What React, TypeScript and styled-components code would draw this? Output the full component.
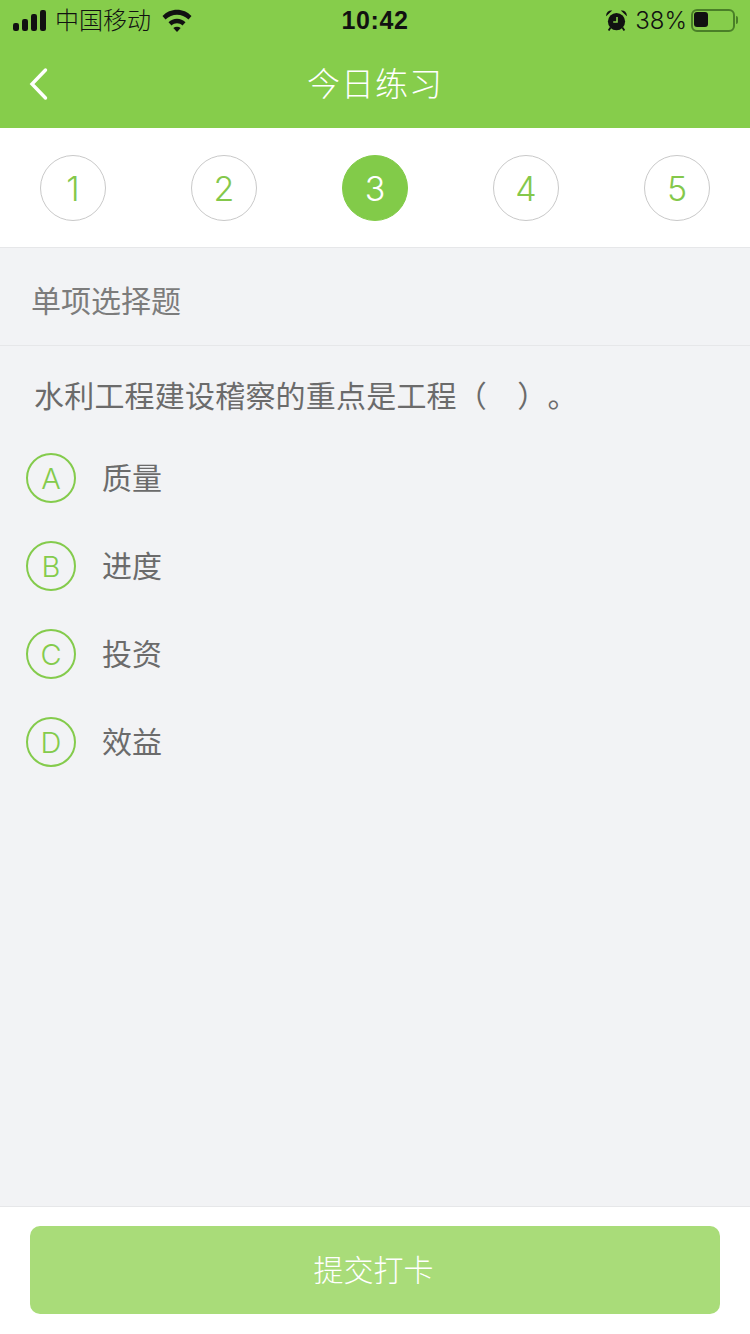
import React from 'react'
import styled, { createGlobalStyle } from 'styled-components'

const GREEN = '#86cd4b'
const FONT = '"Noto Sans CJK SC", "Liberation Sans", sans-serif'
const LATIN = '"Liberation Sans", "Noto Sans CJK SC", sans-serif'
const LIGHT = 'Inter, "Liberation Sans", sans-serif'

const GlobalStyle = createGlobalStyle`
  html, body {
    margin: 0;
    padding: 0;
    background: #f2f3f5;
  }
  * {
    box-sizing: border-box;
  }
`

const Page = styled.div`
  width: 750px;
  height: 1334px;
  display: flex;
  flex-direction: column;
  overflow: hidden;
  background: #f2f3f5;
  font-family: ${FONT};
  text-spacing-trim: space-all;
`

const Top = styled.header`
  height: 128px;
  flex: none;
  background: ${GREEN};
`

const StatusBar = styled.div`
  height: 40px;
  padding: 0 13px;
  display: grid;
  grid-template-columns: 1fr auto 1fr;
  align-items: center;
  color: #111;
`

const StatusLeft = styled.div`
  display: flex;
  align-items: center;
`

const Carrier = styled.span`
  margin: -2px 0 0 9px;
  font-size: 24px;
  line-height: 40px;
  font-weight: 300;
`

const Wifi = styled.svg`
  margin-left: 11px;
`

const Clock = styled.span`
  font-family: ${LATIN};
  font-size: 25px;
  font-weight: 700;
  letter-spacing: 0.6px;
`

const StatusRight = styled.div`
  display: flex;
  align-items: center;
  justify-content: flex-end;
`

const Percent = styled.span`
  margin: 0 4px 0 8px;
  font-family: ${LIGHT};
  font-size: 24px;
  font-weight: 350;
`

const Battery = styled.div`
  width: 44px;
  height: 23px;
  padding: 1px;
  border: 2px solid #4a7f28;
  border-radius: 6px;
  margin-right: 2px;
  position: relative;

  &::before {
    content: '';
    display: block;
    width: 14px;
    height: 15px;
    border-radius: 3px;
    background: #111;
  }

  &::after {
    content: '';
    position: absolute;
    right: -5px;
    top: 5px;
    width: 2px;
    height: 8px;
    border-radius: 0 2px 2px 0;
    background: #4a7f28;
  }
`

const NavBar = styled.div`
  height: 88px;
  padding: 0 0 0 28px;
  display: grid;
  grid-template-columns: 1fr auto 1fr;
  align-items: center;
`

const NavTitle = styled.h1`
  margin: -4px 0 0;
  color: #fff;
  font-size: 33px;
  font-weight: 300;
  letter-spacing: 1px;
  transform: translateX(-14px);
`

const Steps = styled.div`
  height: 120px;
  flex: none;
  padding: 27px 40px 0;
  display: flex;
  justify-content: space-between;
  align-items: flex-start;
  background: #fff;
  border-bottom: 1px solid #e6e7e9;
`

const Step = styled.div<{ $active?: boolean }>`
  width: 66px;
  height: 66px;
  display: flex;
  align-items: center;
  justify-content: center;
  border-radius: 50%;
  border: 1px solid ${p => (p.$active ? '#82cb49' : '#c9c9c9')};
  background: ${p => (p.$active ? '#82cb49' : '#fff')};
  color: ${p => (p.$active ? '#fff' : '#84c84b')};
  font-family: ${LIGHT};
  font-size: 34px;
  font-weight: 350;
`

const SectionTitle = styled.div`
  height: 98px;
  flex: none;
  padding: 4px 0 0 31px;
  display: flex;
  align-items: center;
  border-bottom: 1px solid #e6e7e9;
  color: #7c7c7c;
  font-size: 30px;
  font-weight: 400;
`

const Question = styled.p`
  margin: 0;
  height: 100px;
  flex: none;
  padding: 27px 0 0 34px;
  color: #6b6b6b;
  font-size: 30px;
  line-height: 42px;
  font-weight: 400;
  letter-spacing: 0.2px;
`

const Options = styled.div`
  flex: 1;
  padding: 7px 26px 0;
  display: flex;
  flex-direction: column;
  gap: 38px;
`

const Option = styled.div`
  height: 50px;
  display: flex;
  align-items: center;
  gap: 26px;
`

const Letter = styled.span`
  width: 50px;
  height: 50px;
  flex: none;
  display: flex;
  align-items: center;
  justify-content: center;
  padding-top: 1px;
  border-radius: 50%;
  border: 2px solid #84cb4c;
  color: #84cb4c;
  font-family: ${LIGHT};
  font-size: 29px;
  font-weight: 350;
`

const OptionText = styled.span`
  margin-top: -4px;
  color: #6b6b6b;
  font-size: 30px;
  font-weight: 400;
`

const Footer = styled.footer`
  height: 128px;
  flex: none;
  padding: 19px 30px 0;
  background: #fff;
  border-top: 1px solid #e6e7e9;
`

const SubmitButton = styled.button`
  width: 100%;
  height: 88px;
  padding: 0 3px 4px 0;
  border: none;
  border-radius: 10px;
  background: #a9dc79;
  color: #fff;
  font-family: ${FONT};
  font-size: 30px;
  font-weight: 300;
`

const Alarm = () => (
  <svg width="21" height="21" viewBox="0 0 21 21">
    <circle cx="10.5" cy="11.6" r="8.6" fill="#111" />
    <path d="M0.2 6.2 A5 5 0 0 1 6.2 0.6 Z M20.8 6.2 A5 5 0 0 0 14.8 0.6 Z" fill="#111" />
    <path d="M4.6 17.5l-2 3M16.4 17.5l2 3" stroke="#111" strokeWidth="1.8" />
    <path d="M11 7v5H7.2" fill="none" stroke="#86cd4b" strokeWidth="1.6" />
  </svg>
)

const steps = [1, 2, 3, 4, 5]
const options = [
  ['A', '质量'],
  ['B', '进度'],
  ['C', '投资'],
  ['D', '效益'],
]

const App = () => (
  <Page>
    <GlobalStyle />
    <Top>
      <StatusBar>
        <StatusLeft>
          <svg width="33" height="21" viewBox="0 0 33 21">
            <rect x="0" y="13" width="6" height="8" rx="2.2" fill="#111" />
            <rect x="9" y="9" width="6" height="12" rx="2.2" fill="#111" />
            <rect x="18" y="4" width="6" height="17" rx="2.2" fill="#111" />
            <rect x="27" y="0" width="6" height="21" rx="2.2" fill="#111" />
          </svg>
          <Carrier>中国移动</Carrier>
          <Wifi width="30" height="23" viewBox="0 0 30 23">
            <path d="M0.5 7C8-1.5 22-1.5 29.5 7L26.5 10.5C20 4 10 4 3.5 10.5Z" fill="#111" />
            <path d="M6.5 13.3C11 8.5 19 8.5 23.5 13.3L20.5 16.6C17.5 13.5 12.5 13.5 9.5 16.6Z" fill="#111" />
            <path d="M11.3 19C13.5 17.2 16.5 17.2 18.7 19L15 23Z" fill="#111" />
          </Wifi>
        </StatusLeft>
        <Clock>10:42</Clock>
        <StatusRight>
          <Alarm />
          <Percent>38%</Percent>
          <Battery />
        </StatusRight>
      </StatusBar>
      <NavBar>
        <svg width="22" height="34" viewBox="0 0 22 34">
          <path d="M17.5 3 L4 17 L17.5 31" fill="none" stroke="#fff" strokeWidth="3.4" strokeLinecap="round" />
        </svg>
        <NavTitle>今日练习</NavTitle>
        <span />
      </NavBar>
    </Top>
    <Steps>
      {steps.map(n => (
        <Step key={n} $active={n === 3}>{n}</Step>
      ))}
    </Steps>
    <SectionTitle>单项选择题</SectionTitle>
    <Question>水利工程建设稽察的重点是工程（　）。</Question>
    <Options>
      {options.map(([letter, text]) => (
        <Option key={letter}>
          <Letter>{letter}</Letter>
          <OptionText>{text}</OptionText>
        </Option>
      ))}
    </Options>
    <Footer>
      <SubmitButton>提交打卡</SubmitButton>
    </Footer>
  </Page>
)

export default App
